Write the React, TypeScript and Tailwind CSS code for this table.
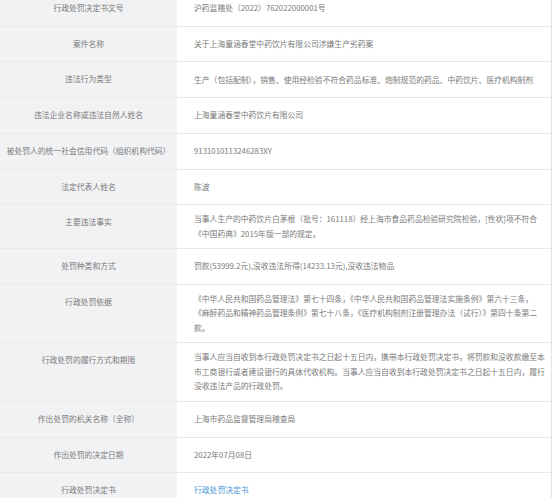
const rows: { label: string; lines: string[]; link?: boolean }[] = [
  { label: "行政处罚决定书文号", lines: ["沪药监稽处（2022）762022000001号"] },
  { label: "案件名称", lines: ["关于上海童涵春堂中药饮片有限公司涉嫌生产劣药案"] },
  {
    label: "违法行为类型",
    lines: ["生产（包括配制），销售、使用经检验不符合药品标准、炮制规范的药品、中药饮片、医疗机构制剂"],
  },
  { label: "违法企业名称或违法自然人姓名", lines: ["上海童涵春堂中药饮片有限公司"] },
  { label: "被处罚人的统一社会信用代码（组织机构代码）", lines: ["9131010113246283XY"] },
  { label: "法定代表人姓名", lines: ["陈波"] },
  {
    label: "主要违法事实",
    lines: [
      "当事人生产的中药饮片白茅根（批号：161118）经上海市食品药品检验研究院检验，[性状]项不符合",
      "《中国药典》2015年版一部的规定。",
    ],
  },
  { label: "处罚种类和方式", lines: ["罚款(53999.2元),没收违法所得(14233.13元),没收违法物品"] },
  {
    label: "行政处罚依据",
    lines: [
      "《中华人民共和国药品管理法》第七十四条，《中华人民共和国药品管理法实施条例》第六十三条，",
      "《麻醉药品和精神药品管理条例》第七十八条，《医疗机构制剂注册管理办法（试行）》第四十条第二",
      "款。",
    ],
  },
  {
    label: "行政处罚的履行方式和期限",
    lines: [
      "当事人应当自收到本行政处罚决定书之日起十五日内，携带本行政处罚决定书，将罚款和没收款缴至本",
      "市工商银行或者建设银行的具体代收机构。当事人应当自收到本行政处罚决定书之日起十五日内，履行",
      "没收违法产品的行政处罚。",
    ],
  },
  { label: "作出处罚的机关名称（全称）", lines: ["上海市药品监督管理局稽查局"] },
  { label: "作出处罚的决定日期", lines: ["2022年07月08日"] },
  { label: "行政处罚决定书", lines: ["行政处罚决定书"], link: true },
];

export default function App() {
  return (
    <div className="w-[554px] h-[498px] overflow-hidden bg-white font-['Noto_Sans_CJK_SC',sans-serif] text-[7.8px] text-[#7a7a7a]">
      <div className="w-[552px] -mt-[9px] border-r border-[#e3e3e3]">
        {rows.map((row) => (
          <div key={row.label} className="flex border-b border-[#e9e9e9]">
            <div className="w-[177px] shrink-0 bg-[#f1f2f4] py-[10px] leading-[14.7px] text-center whitespace-nowrap">
              {row.label}
            </div>
            <div className="flex-1 pl-[17px] pr-[6px] py-[7px] flex flex-col justify-center">
              {row.lines.map((line, i) => (
                <span
                  key={i}
                  className={
                    row.link
                      ? "block leading-[14.5px] whitespace-nowrap text-[#4a94d8]"
                      : "block leading-[14.5px] whitespace-nowrap"
                  }
                >
                  {line}
                </span>
              ))}
            </div>
          </div>
        ))}
      </div>
    </div>
  );
}
